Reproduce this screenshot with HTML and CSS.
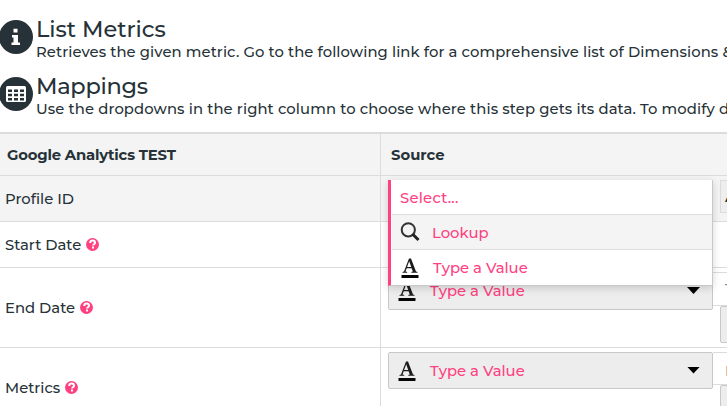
FILE: index.html
```
<!DOCTYPE html>
<html lang="en">
<head>
<meta charset="utf-8">
<title>List Metrics</title>
<link rel="stylesheet" href="styles.css">
</head>
<body>
<svg class="defs" width="0" height="0">
  <symbol id="help" viewBox="0 0 13 13"><circle cx="6.5" cy="6.5" r="6.5" fill="#ff4081"/><path d="M4.2 5c0-1.6 1-2.4 2.4-2.4S9 3.500 9 4.700c0 1.600-1.900 1.500-1.900 2.900" fill="none" stroke="#fff" stroke-width="2"/><path d="M6 8.600h2v1.900H6z" fill="#fff"/></symbol>
  <symbol id="type" viewBox="0 0 18 20"><path d="M1.500 14.800v-.8l1.500-.5L8 .5h2L15 13.500l1.500.5v.8h-6.200V14l1.500-.5-1.200-3.300H5.700l-1.200 3.300 1.700.5v.8zM6.100 9h4.100L8.200 3.300z" fill="#1c1c1c"/><path d="M.5 17h17v3H.5z" fill="#050505"/></symbol>
</svg>
<header class="section">
  <svg class="badge" viewBox="0 0 34 34"><circle cx="17" cy="17" r="17" fill="#263238"/><path d="M14.500 8.800h4v3.600h-4zM13 15h6v7.500h2V25h-8.500v-2.500h2v-5H13z" fill="#fff"/></svg>
  <div><h1 class="t-list">List Metrics</h1><p class="t-retrieves">Retrieves the given metric. Go to the following link for a comprehensive list of Dimensions &amp;</p></div>
</header>
<header class="section">
  <svg class="badge" viewBox="0 0 34 34"><circle cx="17" cy="17" r="17" fill="#263238"/><rect x="7" y="9" width="20" height="16" rx="1.500" fill="#fff"/><path d="M9 12.500h4v2.500H9zM15 12.500h4v2.500h-4zM21 12.500h4v2.500h-4zM9 16.700h4v2.500H9zM15 16.700h4v2.500h-4zM21 16.700h4v2.500h-4zM9 20.900h4v2.500H9zM15 20.900h4v2.500h-4zM21 20.900h4v2.500h-4z" fill="#263238"/></svg>
  <div><h1 class="t-map">Mappings</h1><p class="t-use">Use the dropdowns in the right column to choose where this step gets its data. To modify d</p></div>
</header>
<main class="table">
  <div class="row head"><div class="name"><b class="t-ga">Google Analytics TEST</b></div><div class="source"><b class="t-source">Source</b></div></div>
  <div class="row profile"><div class="name"><span class="t-profile">Profile ID</span></div>
    <div class="source">
      <div class="menu">
        <div class="option"><span class="t-select">Select...</span></div>
        <div class="option active"><svg class="search" viewBox="0 0 20 20"><circle cx="8.300" cy="7.800" r="6.600" fill="none" stroke="#333" stroke-width="2"/><path d="M12.500 12l6 6" stroke="#222" stroke-width="3"/></svg><span class="t-lookup">Lookup</span></div>
        <div class="option"><svg class="type"><use href="#type"/></svg><span class="t-type">Type a Value</span></div>
      </div>
      <div class="side-button">A</div>
    </div>
  </div>
  <div class="row start"><div class="name"><span class="t-start">Start Date</span><svg class="help"><use href="#help"/></svg></div><div class="source"></div></div>
  <div class="row end"><div class="name"><span class="t-end">End Date</span><svg class="help"><use href="#help"/></svg></div>
    <div class="source"><div class="select"><svg class="type"><use href="#type"/></svg><span class="t-type">Type a Value</span><i class="arrow"></i></div><div class="side"><div class="field">T</div><div class="box"></div></div></div>
  </div>
  <div class="row metrics"><div class="name"><span class="t-metrics">Metrics</span><svg class="help"><use href="#help"/></svg></div>
    <div class="source"><div class="select"><svg class="type"><use href="#type"/></svg><span class="t-type">Type a Value</span><i class="arrow"></i></div><div class="side"><div class="field">E</div><div class="box"></div></div></div>
  </div>
</main>
</body>
</html>
```
FILE: styles.css
```
* { box-sizing: border-box; }
body { margin: 0; padding-top: 15px; height: 406px; overflow: hidden; background: #fff; color: #263238; font: 500 14.8px/20px Montserrat, Inter, sans-serif; white-space: nowrap; }
.defs { position: absolute; }
.section { display: flex; height: 57px; }
.section > div { margin-left: 3px; }
.badge { flex: none; width: 34px; height: 34px; margin: 5px 0 0 -1px; }
h1 { margin: 0; font-size: 22.5px; line-height: 29px; font-weight: 500; }
.t-map { letter-spacing: -.3px; }
.t-list { letter-spacing: -.05px; }
p { margin: -2px 0 0; }
.t-retrieves { letter-spacing: .08px; }
.t-use { letter-spacing: .1px; }
span, b, h1 { width: max-content; }
b { font-weight: 700; }
.t-ga { letter-spacing: -.18px; }
.table { margin-top: 3px; border-top: 2px solid #dcdcdc; }
.row { display: grid; grid-template-columns: 381px 1fr; border-bottom: 1px solid #dcdcdc; }
.name { display: flex; align-items: center; padding-left: 5px; border-right: 1px solid #dcdcdc; }
.source { display: flex; min-width: 0; position: relative; }
.head { height: 42px; background: #f4f4f4; }
.head .name { padding-left: 7px; }
.head .source { align-items: center; padding-left: 10px; }
.profile { height: 46px; background: #f4f4f4; }
.start { height: 46px; }
.end { height: 80px; }
.metrics { height: 80px; }
.help { width: 13px; height: 13px; margin-left: 4.5px; }
.menu { position: absolute; z-index: 2; left: 7px; top: 4px; width: 325px; height: 106px; background: #fff; border-left: 3px solid #ff4081; border-right: 1px solid #c8c8c8; border-bottom: 1px solid #c8c8c8; box-shadow: 0 2px 8px rgba(0,0,0,.16); color: #ff4081; padding-left: 1px; }
.option { display: flex; align-items: center; height: 35px; padding-left: 8px; border-bottom: 1px solid #dcdcdc; }
.option span { padding-top: 1px; }
.t-select { letter-spacing: .25px; }
.option:last-child { border: 0; }
.option:last-child span { padding-top: 0; }
.active { background: #f4f4f4; }
.search { width: 20px; height: 20px; margin-right: 12px; }
.type { flex: none; width: 18px; height: 20px; margin: 0 14px 0 1px; }
.side-button { width: 20px; height: 33px; margin: 4px 0 0 339px; padding: 6px 0 0 4px; border: 1px solid #dcdcdc; background: #eee; color: #111; }
.select { flex: none; display: flex; align-items: center; width: 325px; height: 38px; margin: 4px 0 0 7px; padding-left: 8px; border: 1px solid #c8c8c8; border-radius: 2px; background: #ededed; color: #ff4081; }
.metrics .select { height: 37px; }
.arrow { width: 13px; height: 7px; margin: -1px 12px 0 auto; background: #000; clip-path: polygon(0 0, 100% 0, 50% 100%); }
.side { width: 14px; flex: none; margin-top: 4px; }
.field { height: 34px; border: solid #dcdcdc; border-width: 1px 0; padding: 6px 0 0 12px; color: #888; }
.box { height: 37px; margin-left: 7px; width: 20px; border: 1px solid #c8c8c8; border-radius: 2px; background: #ededed; }
.metrics .field { height: 33px; padding-top: 8px; }
.metrics .box { height: 38px; }
```
